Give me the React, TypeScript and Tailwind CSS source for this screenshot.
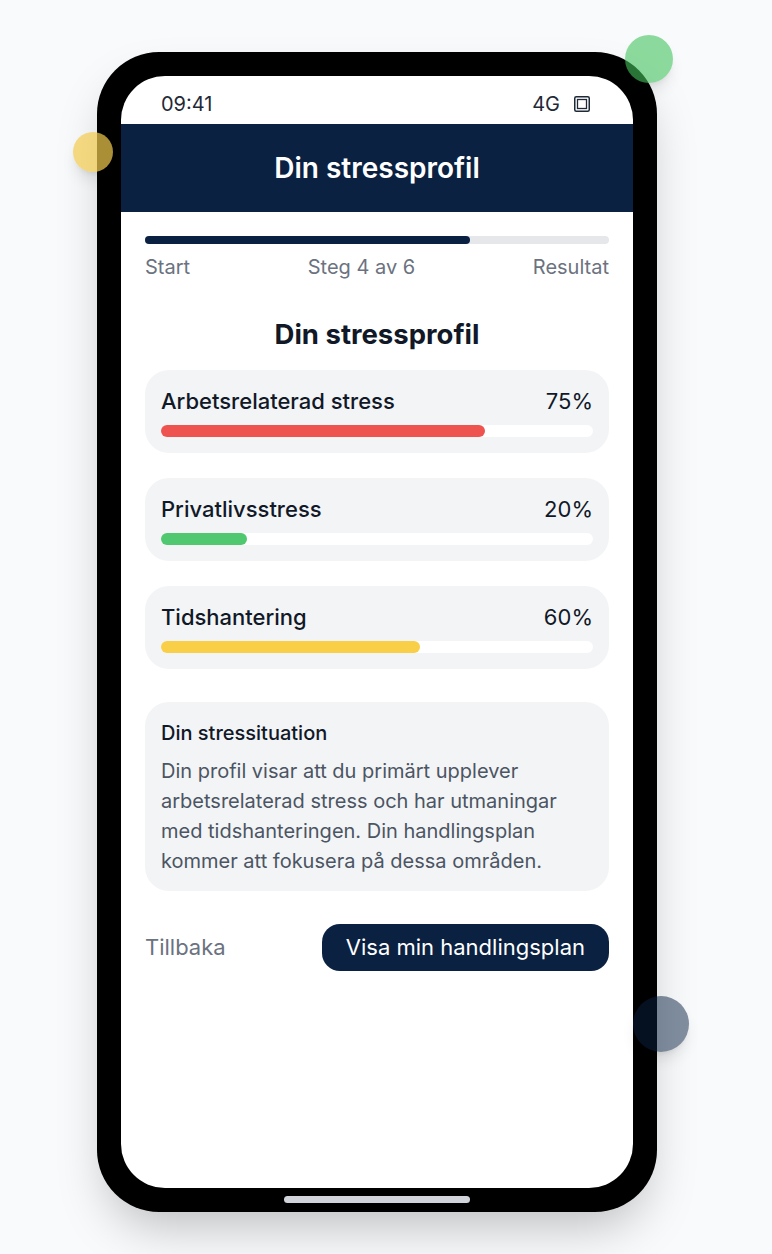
import React from 'react';

const scores = [
  { label: 'Arbetsrelaterad stress', value: 75, color: 'bg-[#ef5350]' },
  { label: 'Privatlivsstress', value: 20, color: 'bg-[#4fc86f]' },
  { label: 'Tidshantering', value: 60, color: 'bg-[#f8cf47]' },
];

function BatteryIcon() {
  return (
    <svg width="16" height="16" viewBox="0 0 16 16" fill="none" className="text-[#1f2937]">
      <rect x="0.75" y="0.75" width="14.5" height="14.5" rx="1.5" stroke="currentColor" strokeWidth="1.5" />
      <rect x="3.5" y="3.5" width="9" height="9" stroke="currentColor" strokeWidth="1.3" />
    </svg>
  );
}

function App() {
  return (
    <div
      className="min-h-screen w-full overflow-hidden bg-[#f8fafc] pt-[52px] pl-[97px]"
      style={{ fontFamily: 'Inter, "Noto Sans", sans-serif' }}
    >
      <div className="relative w-[560px] h-[1160px]">
        {/* phone body */}
        <div className="w-full h-full rounded-[62px] bg-black p-6 shadow-2xl">
          <div className="w-full h-full rounded-[44px] bg-white overflow-hidden flex flex-col">
            {/* status bar */}
            <div className="h-12 pt-2 flex items-center justify-between pl-10 pr-[43px] text-[20px] text-[#1f2937]">
              <span>09:41</span>
              <div className="flex items-center gap-[14px]">
                <span>4G</span>
                <BatteryIcon />
              </div>
            </div>

            {/* header */}
            <div className="h-[88px] bg-[#0a2142] flex items-center justify-center">
              <h1 className="text-white text-[28px] font-semibold">Din stressprofil</h1>
            </div>

            <div className="px-6 pt-6">
              {/* progress */}
              <div className="h-2 w-full rounded-full bg-[#e5e7eb]">
                <div className="h-2 w-[70%] rounded-full bg-[#0a2142]" />
              </div>
              <div className="mt-[9px] flex justify-between text-[20px] leading-[28px] text-[#6b7280]">
                <span>Start</span>
                <span>Steg 4 av 6</span>
                <span>Resultat</span>
              </div>

              <h2 className="mt-[35px] text-center text-[27.5px] leading-[36px] font-bold text-[#111827]">
                Din stressprofil
              </h2>

              <div className="mt-[18px] flex flex-col gap-[25px]">
                {scores.map((s) => (
                  <div key={s.label} className="rounded-3xl bg-[#f3f4f6] px-4 pt-4 pb-4">
                    <div className="flex justify-between text-[22px] leading-[31px] font-medium text-[#111827]">
                      <span>{s.label}</span>
                      <span className="font-normal">{s.value}%</span>
                    </div>
                    <div className="mt-2 h-3 w-full rounded-full bg-white">
                      <div className={`h-3 rounded-full ${s.color}`} style={{ width: `${s.value}%` }} />
                    </div>
                  </div>
                ))}
              </div>

              <div className="mt-[33px] rounded-3xl bg-[#f3f4f6] px-4 pt-4 pb-[15px]">
                <h3 className="text-[20px] leading-[30px] font-medium text-[#111827]">Din stressituation</h3>
                <p className="mt-2 text-[20px] leading-[30px] text-[#4b5563]">
                  Din profil visar att du primärt upplever arbetsrelaterad stress och har utmaningar med
                  tidshanteringen. Din handlingsplan kommer att fokusera på dessa områden.
                </p>
              </div>

              <div className="mt-[33px] flex items-center justify-between">
                <button className="text-[22px] text-[#6b7280]">Tillbaka</button>
                <button className="h-[47px] rounded-[18px] bg-[#0a2142] px-6 text-[22px] text-white">
                  Visa min handlingsplan
                </button>
              </div>
            </div>
          </div>
        </div>

        {/* home indicator */}
        <div className="absolute left-[187px] top-[1144px] h-[7px] w-[186px] rounded-full bg-[#d1d5db]" />

        {/* decorative dots */}
        <div className="absolute left-[528px] top-[-17px] h-12 w-12 rounded-full bg-[#45c35e]/60 shadow-lg" />
        <div className="absolute left-[-24px] top-[80px] h-10 w-10 rounded-full bg-[#f3cc4f]/70 shadow-lg" />
        <div className="absolute left-[536px] top-[944px] h-14 w-14 rounded-full bg-[#0a2142]/50 shadow-lg" />
      </div>
    </div>
  );
}

export default App;
